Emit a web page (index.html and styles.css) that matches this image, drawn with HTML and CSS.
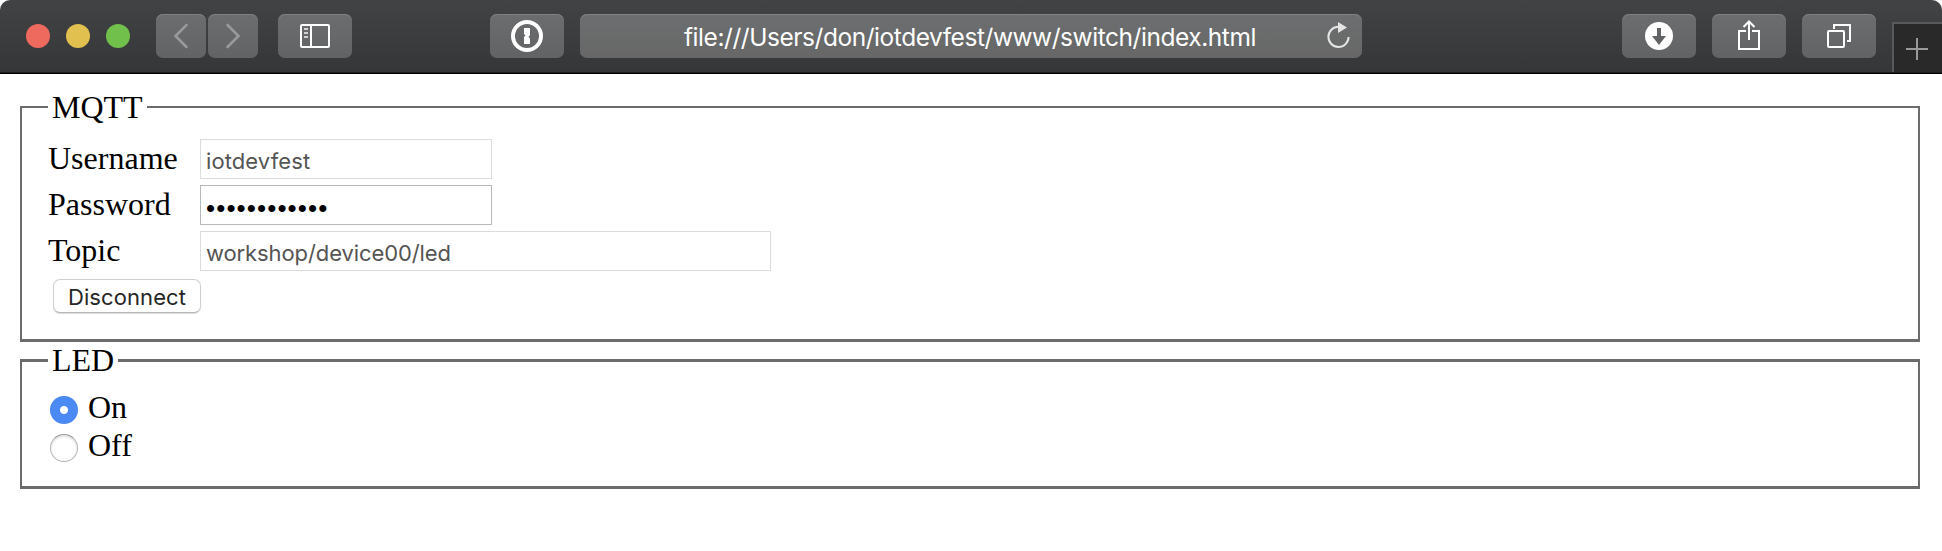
FILE: index.html
```html
<!DOCTYPE html>
<html lang="en">
<head>
<meta charset="utf-8">
<title>Switch</title>
<link rel="stylesheet" href="styles.css">
</head>
<body>
<header class="toolbar">
  <div class="lights"><i class="light red"></i><i class="light yellow"></i><i class="light green"></i></div>
  <div class="nav">
    <div class="tool small"><svg width="50" height="44" fill="none" stroke="#98999a" stroke-width="2.6" stroke-linecap="round"><path d="M30.5 11 19.5 22l11 11"/></svg></div>
    <div class="tool small"><svg width="50" height="44" fill="none" stroke="#98999a" stroke-width="2.6" stroke-linecap="round"><path d="M19.500 11l11 11-11 11"/></svg></div>
  </div>
  <div class="tool sidebar"><svg width="74" height="44" fill="none" stroke="#fff" stroke-width="2"><rect x="23" y="11" width="28" height="22" rx="1"/><path d="M33 11v22"/><path d="M26 15h4M26 19h4M26 23h4" stroke="#d0d0d2" stroke-width="1.800"/></svg></div>
  <div class="tool onepass"><svg width="74" height="44"><circle cx="37" cy="22" r="14" fill="none" stroke="#fff" stroke-width="4"/><path fill="#fff" d="M34 14h6v7l-1.500 2 1.500 1.500V30h-6v-7l1.500-1.500L34 20z"/></svg></div>
  <div class="address"><span class="url">file:///Users/don/iotdevfest/www/switch/index.html</span>
    <svg class="reload" width="30" height="44"><path d="M15.500 12.800A10.100 10.100 0 1 0 25.600 23" fill="none" stroke="#e4e4e4" stroke-width="2"/><path d="M15 8v11l9-5.500z" fill="#e4e4e4"/></svg>
  </div>
  <div class="tool download"><svg width="74" height="44"><circle cx="37" cy="22" r="14" fill="#fff"/><path d="M35 14h4v8h5l-7 9-7-9h5z" fill="#626365"/></svg></div>
  <div class="tool share"><svg width="74" height="44" fill="none" stroke="#fff" stroke-width="2"><path d="M34 17h-7v18h20V17h-7M37 26V7.500M31.500 13 37 7.500l5.500 5.500"/></svg></div>
  <div class="tool tabs"><svg width="74" height="44" fill="none" stroke="#fff" stroke-width="2"><rect x="26" y="17" width="16" height="16" rx="1"/><path d="M32 15v-4h16v16h-3"/></svg></div>
  <div class="newtab"><svg width="48" height="48" stroke="#98999a" stroke-width="2"><path d="M12 25h22M23 14v22"/></svg></div>
</header>
<main class="page">
  <fieldset class="group mqtt">
    <legend>MQTT</legend>
    <div class="fields">
      <label for="user">Username</label><div class="field" id="user">iotdevfest</div>
      <label for="pass">Password</label><div class="field active" id="pass"><span class="dots">••••••••••••</span></div>
      <label for="topic">Topic</label><div class="field wide" id="topic">workshop/device00/led</div>
    </div>
    <button class="disconnect">Disconnect</button>
  </fieldset>
  <fieldset class="group led">
    <legend>LED</legend>
    <label class="option"><input type="radio" name="led" checked>On</label>
    <label class="option"><input type="radio" name="led">Off</label>
  </fieldset>
</main>
</body>
</html>
```
FILE: styles.css
```css
* { box-sizing: border-box; }
body { margin: 0; background: #fff; color: #000; font: 32px/36px "Liberation Serif", serif; }
.toolbar {
  display: flex; align-items: flex-start; height: 74px; padding: 14px 0 0 26px; overflow: hidden;
  background: linear-gradient(#424345, #353638); border-bottom: 1px solid #000;
  border-radius: 10px 10px 0 0; box-shadow: inset 0 -1px #1c1c1d;
}
.lights { display: flex; gap: 16px; padding-top: 10px; width: 130px; }
.light { width: 24px; height: 24px; border-radius: 50%; }
.red { background: #ee695e; }
.yellow { background: #e1c04f; }
.green { background: #71c04b; }
.nav { display: flex; gap: 2px; margin-right: 20px; }
.tool, .address {
  height: 44px; border-radius: 7px; background: linear-gradient(#6c6d6f, #626365);
  box-shadow: inset 0 1px #808183; flex: none;
}
.tool { width: 74px; }
.tool svg, .newtab svg { display: block; }
.small { width: 50px; }
.onepass { margin-left: 138px; }
.address { position: relative; display: flex; width: 782px; margin-left: 16px; background: linear-gradient(#6d6e70, #666766); }
.url { margin-left: 104px; color: #fff; font: 24.5px/47px Inter, sans-serif; letter-spacing: -0.450px; white-space: nowrap; width: 572px; }
.reload { position: absolute; right: 9px; top: 0; }
.download { margin-left: 260px; }
.share, .tabs { margin-left: 16px; }
.newtab { width: 50px; height: 50px; margin: 8px 0 0 16px; border: 2px solid #59595b; border-width: 2px 0 0 2px; background: #29292a; flex: none; }
.page { padding: 15px 22px 0 20px; }
.group { min-width: 0; margin: 0; border: 2px solid #6c6c6c; border-bottom-width: 3px; }
.group legend { padding: 0 4px; }
.mqtt { height: 253px; padding: 14px 26px 0; }
.led { height: 147px; padding: 9px 26px 0; border-top-width: 3px; }
.led legend { height: 37px; }
.fields { display: grid; grid-template-columns: 152px 1fr; row-gap: 6px; line-height: 39px; }
.field { width: 292px; height: 40px; padding: 0 5px; border: 1px solid #dcdcdc; color: #545454; font: 22px/43px Inter, sans-serif; white-space: nowrap; }
#user { letter-spacing: 0.100px; }
.wide { width: 571px; letter-spacing: -0.100px; }
.active { border-color: #b8b8b8; color: #000; }
.dots { display: block; font: 26px/44px "Liberation Sans", sans-serif; letter-spacing: 1.100px; }
.disconnect {
  display: block; width: 148px; height: 34px; margin: 8px 0 0 5px; padding: 0;
  border: 1px solid #d0d0d0; border-bottom-color: #b5b5b5; border-radius: 7px; background: #fff; color: #262626;
  font: 22px/34px Inter, sans-serif; letter-spacing: 0.100px; box-shadow: 0 1px 1px #ddd;
}
.option { display: flex; height: 38px; line-height: 38px; }
.option input {
  appearance: none; width: 28px; height: 28px; margin: 8px 10px 0 2px; border-radius: 50%;
  border: 1px solid #b4b4b4; border-top-color: #999; box-shadow: inset 0 2px 2px #e4e4e4;
}
.option input:checked { border: 0; background: radial-gradient(circle, #fff 3.500px, #4b89f5 4.500px); box-shadow: none; }
```
